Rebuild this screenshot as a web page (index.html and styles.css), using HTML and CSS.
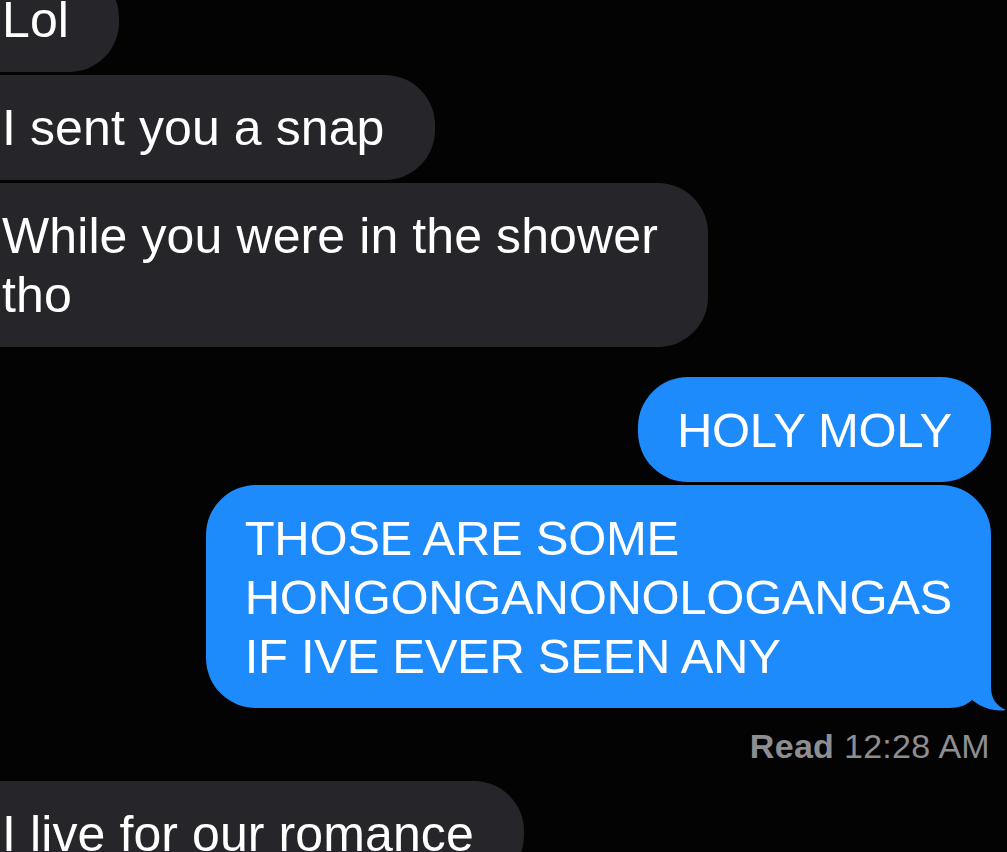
FILE: index.html
```html
<!DOCTYPE html>
<html lang="en">
<head>
<meta charset="utf-8">
<title>Messages</title>
<link rel="stylesheet" href="styles.css">
</head>
<body>
<main class="thread">
  <div class="msg in">Lol</div>
  <div class="msg in">I sent you a snap</div>
  <div class="msg in">While you were in the shower<br>tho</div>
  <div class="msg out first">HOLY MOLY</div>
  <div class="msg out last">THOSE ARE SOME<br>HONGONGANONOLOGANGAS<br>IF IVE EVER SEEN ANY<svg class="tail" viewBox="0 0 70 60" width="70" height="60" aria-hidden="true"><path d="M0 0 H54 V36 C54 47 59 55 69 59 C58 61 45 57 35 49 C30 54 22 57 12 57 H0 Z"/></svg></div>
  <div class="receipt"><b>Read</b> 12:28 AM</div>
  <div class="msg in after-receipt">I live for our romance</div>
</main>
</body>
</html>
```
FILE: styles.css
```css
html, body {
  margin: 0;
  padding: 0;
  background: #030303;
  height: 852px;
  overflow: hidden;
}

.thread {
  display: flex;
  flex-direction: column;
  margin-top: -33px;
  font-family: "Liberation Sans", Arial, sans-serif;
  color: #ffffff;
}

.msg {
  position: relative;
  white-space: nowrap;
  font-size: 50px;
  line-height: 59px;
  border-radius: 50px;
}

.in {
  align-self: flex-start;
  margin-left: -48px;
  margin-bottom: 3px;
  padding: 24px 50px 22px 50px;
  background: #262529;
  letter-spacing: 0.1px;
}

.out {
  align-self: flex-end;
  margin-right: 16px;
  padding: 24px 39px 22px 39px;
  background: #1e8bfc;
  font-size: 49px;
  letter-spacing: -0.3px;
}

.out.first {
  margin-top: 27px;
  margin-bottom: 3px;
}

.tail {
  position: absolute;
  right: -16px;
  bottom: -3px;
  fill: #1e8bfc;
}

.receipt {
  align-self: flex-end;
  margin-top: 18px;
  margin-right: 17px;
  font-size: 34px;
  line-height: 40px;
  letter-spacing: 0.3px;
  color: #8d8d92;
}

.receipt b {
  font-weight: 700;
}

.after-receipt {
  margin-top: 15px;
}
```
